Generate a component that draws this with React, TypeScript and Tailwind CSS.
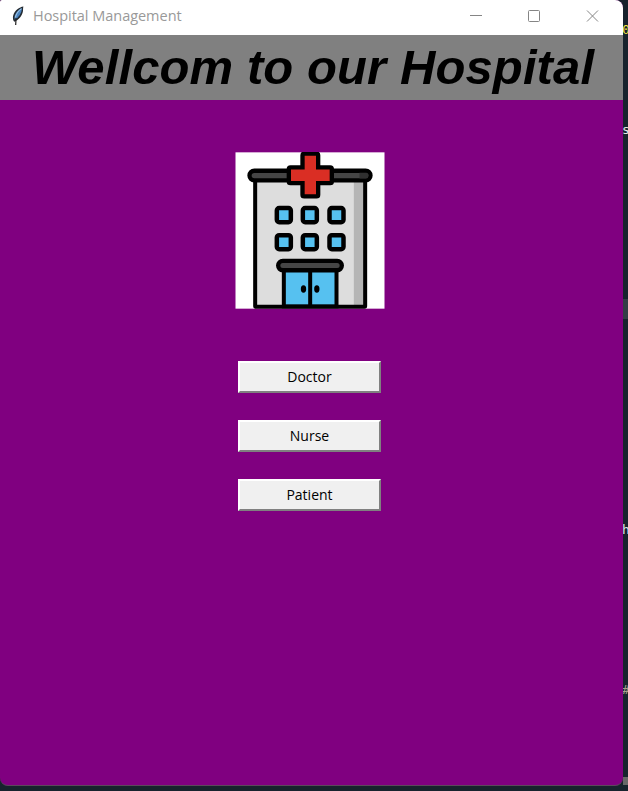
import React from "react";

function Feather() {
  return (
    <svg className="ml-[11px] h-5 w-[13px] shrink-0" viewBox="0 0 13 20">
      <path d="M12.4 0.5 C8.5 1 3.5 4.5 2.2 9.5 C1.6 12 2 14 3.2 15.8 C8 14 11.2 9.5 11.9 5.5 C12.2 3.5 11.9 2 12.4 0.5Z" fill="#252c33" />
      <path d="M11 2 C7.5 3.6 4.2 7 3.4 11.2 L3.8 13.8 C7.8 11.5 10.7 7 11 2Z" fill="#4b83bd" />
      <path d="M10.4 2.6 C7.8 4.4 5.2 7.6 4.4 11.4" fill="none" stroke="#9cc3e4" strokeWidth="1.1" />
      <path d="M5 12 L4.7 19" stroke="#222" strokeWidth="1.2" />
    </svg>
  );
}

const windowSpots = [
  [148, 182], [226, 182], [306, 182],
  [148, 263], [226, 263], [306, 263],
];

function Hospital() {
  return (
    <svg className="mt-[52px] h-[157px] w-[150px] shrink-0" viewBox="29.5 21 450 470" preserveAspectRatio="none">
      <rect x="31" y="22" width="447" height="468" fill="#fff" />
      <rect x="90" y="100" width="330" height="384" rx="2" fill="#ddd" />
      <rect x="386" y="100" width="30" height="380" fill="#b5b5b5" />
      <rect x="90" y="100" width="330" height="384" rx="2" fill="none" stroke="#000" strokeWidth="12" />
      <rect x="73" y="77" width="363" height="29" rx="14.5" fill="#454545" stroke="#000" strokeWidth="13" />
      <path d="M403 83h20q7 0 7 8t-7 9h-20z" fill="#303030" />
      <path d="M237 26h37q5 0 5 5v36h36q5 0 5 5v37q0 5-5 5h-36v35q0 5-5 5h-37q-5 0-5-5v-35h-36q-5 0-5-5V72q0-5 5-5h36V31q0-5 5-5z" fill="#da2e24" stroke="#000" strokeWidth="13" />
      {windowSpots.map(([x, y]) => (
        <rect key={`${x}-${y}`} x={x + 7} y={y + 7} width="42" height="42" rx="7" fill="#56c1f0" stroke="#000" strokeWidth="13.5" />
      ))}
      <rect x="176" y="371" width="158" height="112" fill="#56c1f0" stroke="#000" strokeWidth="12" />
      <path d="M255 378V483" stroke="#000" strokeWidth="12" />
      <rect x="159" y="347" width="191" height="28" rx="14" fill="#454545" stroke="#000" strokeWidth="13" />
      <ellipse cx="235" cy="431" rx="8" ry="11" />
      <ellipse cx="275" cy="431" rx="8" ry="11" />
    </svg>
  );
}

function TkButton({ label }: { label: string }) {
  return (
    <button className="flex h-8 w-[143px] items-center justify-center border-2 border-t-white border-l-white border-r-[#808080] border-b-[#808080] bg-[#f0f0f0] font-['Open_Sans','Noto_Sans',sans-serif] text-[14px] leading-none text-black">
      {label}
    </button>
  );
}

function EditorEdge() {
  return (
    <aside className="flex w-[5px] flex-col overflow-hidden font-['DejaVu_Sans_Mono',monospace] text-[13px] leading-5">
      <span className="-ml-px mt-5 h-5 text-[#f5e642]">0</span>
      <span className="-ml-px mt-20 h-5 text-[#e8e8e8]">s</span>
      <div className="mt-[159px] h-5 bg-[#343d46]" />
      <span className="-ml-px mt-[201px] h-5 text-[#d9e2ea]">h</span>
      <span className="-ml-px mt-[140px] h-5 text-[#a8a08c]">#</span>
      <div className="mt-[77px] h-2 bg-[#686868]" />
    </aside>
  );
}

export default function App() {
  return (
    <div className="flex h-[791px] w-[628px] overflow-hidden bg-[#17232d]">
      <main className="flex h-[786px] w-[623px] shrink-0 flex-col overflow-hidden rounded-[8px] rounded-tl-[2px] border-b border-[#5c485c] bg-[#800080]">
        <header className="flex h-[35px] shrink-0 items-center bg-white pb-[4px]">
          <Feather />
          <h2 className="ml-[9px] whitespace-nowrap pt-[2px] font-['Open_Sans','Noto_Sans',sans-serif] text-[14.5px] font-normal leading-none tracking-[-0.03px] text-[#999]">Hospital Management</h2>
          <svg className="ml-auto mr-[24px] h-3 w-[130px]" viewBox="0 0 130 12" fill="none" stroke="#858585">
            <path d="M1 5.5h12M118 .5l11 11M129 .5l-11 11" />
            <rect x="59.5" y=".5" width="11" height="11" rx="1" />
          </svg>
        </header>
        <div className="flex h-[65px] shrink-0 items-center justify-center bg-[#808080] pl-[3px]">
          <h1 className="whitespace-nowrap font-['Liberation_Sans',Arial,sans-serif] text-[49px] font-bold italic leading-none tracking-[0.1px] text-black">Wellcom to our Hospital</h1>
        </div>
        <section className="flex flex-col items-center pr-[3px]">
          <Hospital />
          <div className="mt-[52px] mr-px flex flex-col gap-[27px]">
            <TkButton label="Doctor" />
            <TkButton label="Nurse" />
            <TkButton label="Patient" />
          </div>
        </section>
      </main>
      <EditorEdge />
    </div>
  );
}
